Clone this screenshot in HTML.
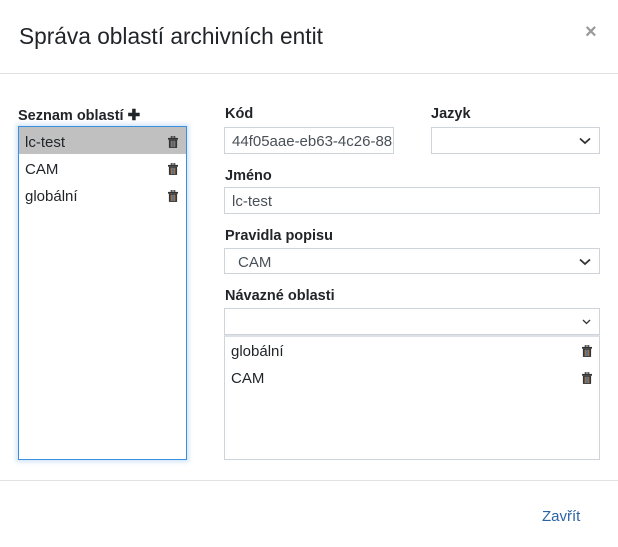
<!DOCTYPE html>
<html><head><meta charset="utf-8"><style>
*{box-sizing:border-box;margin:0;padding:0}
body{width:618px;height:547px;background:#fff;font-family:"Liberation Sans",sans-serif;color:#212529;position:relative;overflow:hidden}
.a{position:absolute}
.t{font-size:22.7px;left:19px;top:23px;color:#212529}
.x{left:585px;top:21px;font-size:20px;color:#999;font-weight:bold}
.hr{left:0;width:618px;height:1px;background:#e2e2e2}
.lbl{font-size:14.5px;font-weight:bold;color:#212529}
.inp{border:1px solid #cfd4da;background:#fff;font-size:15px;color:#495057;padding-left:7px;line-height:27px;overflow:hidden;white-space:nowrap}
.row{font-size:15px;left:0;width:100%;height:27px;line-height:32px;padding-left:6px}
.tr{position:absolute;right:8px;top:9px}
.chev{position:absolute;right:8px;top:9px}
</style></head><body>
<div class="a t">Správa oblastí archivních entit</div>
<div class="a x">×</div>
<div class="a hr" style="top:73px"></div>

<div class="a lbl" style="left:18px;top:106px">Seznam oblastí <span style="font-size:15px">✚</span></div>
<div class="a" style="left:18px;top:126px;width:169px;height:334px;border:1px solid #3a8fe0;box-shadow:0 0 4px 2px rgba(80,150,230,.25)">
 <div class="a row" style="top:0;background:#c0c0c0">lc-test<svg class="tr" width="10" height="12" viewBox="0 0 11 13"><rect x="0" y="2" width="11" height="2" fill="#333"/><rect x="3.5" y="0" width="4" height="2" fill="none" stroke="#333" stroke-width="1"/><rect x="1" y="4" width="9" height="9" fill="#333"/><rect x="3" y="5" width="1" height="7" fill="#a98"/><rect x="5" y="5" width="1" height="7" fill="#9ab"/><rect x="7" y="5" width="1" height="7" fill="#a98"/></svg></div>
 <div class="a row" style="top:27px">CAM<svg class="tr" width="10" height="12" viewBox="0 0 11 13"><rect x="0" y="2" width="11" height="2" fill="#333"/><rect x="3.5" y="0" width="4" height="2" fill="none" stroke="#333" stroke-width="1"/><rect x="1" y="4" width="9" height="9" fill="#333"/><rect x="3" y="5" width="1" height="7" fill="#c96"/><rect x="5" y="5" width="1" height="7" fill="#9bd"/><rect x="7" y="5" width="1" height="7" fill="#c96"/></svg></div>
 <div class="a row" style="top:54px">globální<svg class="tr" width="10" height="12" viewBox="0 0 11 13"><rect x="0" y="2" width="11" height="2" fill="#333"/><rect x="3.5" y="0" width="4" height="2" fill="none" stroke="#333" stroke-width="1"/><rect x="1" y="4" width="9" height="9" fill="#333"/><rect x="3" y="5" width="1" height="7" fill="#c96"/><rect x="5" y="5" width="1" height="7" fill="#9bd"/><rect x="7" y="5" width="1" height="7" fill="#c96"/></svg></div>
</div>

<div class="a lbl" style="left:225px;top:106px">Kód</div>
<div class="a lbl" style="left:431px;top:106px">Jazyk</div>
<div class="a inp" style="left:224px;top:127px;width:170px;height:27px;padding-right:2px">44f05aae-eb63-4c26-885</div>
<div class="a inp" style="left:431px;top:127px;width:169px;height:27px"><svg class="chev" width="12" height="8" viewBox="0 0 12 8"><path d="M1 1.5 6 6 11 1.5" fill="none" stroke="#333" stroke-width="1.8"/></svg></div>

<div class="a lbl" style="left:225px;top:168px">Jméno</div>
<div class="a inp" style="left:224px;top:187px;width:376px;height:27px">lc-test</div>

<div class="a lbl" style="left:225px;top:228px">Pravidla popisu</div>
<div class="a inp" style="left:224px;top:248px;width:376px;height:26px;padding-left:13px">CAM<svg class="chev" width="12" height="8" viewBox="0 0 12 8"><path d="M1 1.5 6 6 11 1.5" fill="none" stroke="#333" stroke-width="1.8"/></svg></div>

<div class="a lbl" style="left:225px;top:288px">Návazné oblasti</div>
<div class="a inp" style="left:224px;top:308px;width:376px;height:27px"><svg class="chev" width="9" height="6" viewBox="0 0 9 6" style="top:10px"><path d="M1 1 4.5 4.5 8 1" fill="none" stroke="#333" stroke-width="1.3"/></svg></div>
<div class="a" style="left:224px;top:335px;width:376px;height:125px;border:1px solid #cfd4da;border-top:2px solid #dde1e5">
 <div class="a row" style="top:-1px">globální<svg class="tr" width="10" height="12" viewBox="0 0 11 13" style="right:7px"><rect x="0" y="2" width="11" height="2" fill="#333"/><rect x="3.5" y="0" width="4" height="2" fill="none" stroke="#333" stroke-width="1"/><rect x="1" y="4" width="9" height="9" fill="#333"/><rect x="3" y="5" width="1" height="7" fill="#c96"/><rect x="5" y="5" width="1" height="7" fill="#9bd"/><rect x="7" y="5" width="1" height="7" fill="#c96"/></svg></div>
 <div class="a row" style="top:26px">CAM<svg class="tr" width="10" height="12" viewBox="0 0 11 13" style="right:7px"><rect x="0" y="2" width="11" height="2" fill="#333"/><rect x="3.5" y="0" width="4" height="2" fill="none" stroke="#333" stroke-width="1"/><rect x="1" y="4" width="9" height="9" fill="#333"/><rect x="3" y="5" width="1" height="7" fill="#c96"/><rect x="5" y="5" width="1" height="7" fill="#9bd"/><rect x="7" y="5" width="1" height="7" fill="#c96"/></svg></div>
</div>

<div class="a hr" style="top:480px"></div>
<div class="a" style="left:542px;top:508px;font-size:15px;color:#2a64a6">Zavřít</div>
</body></html>
